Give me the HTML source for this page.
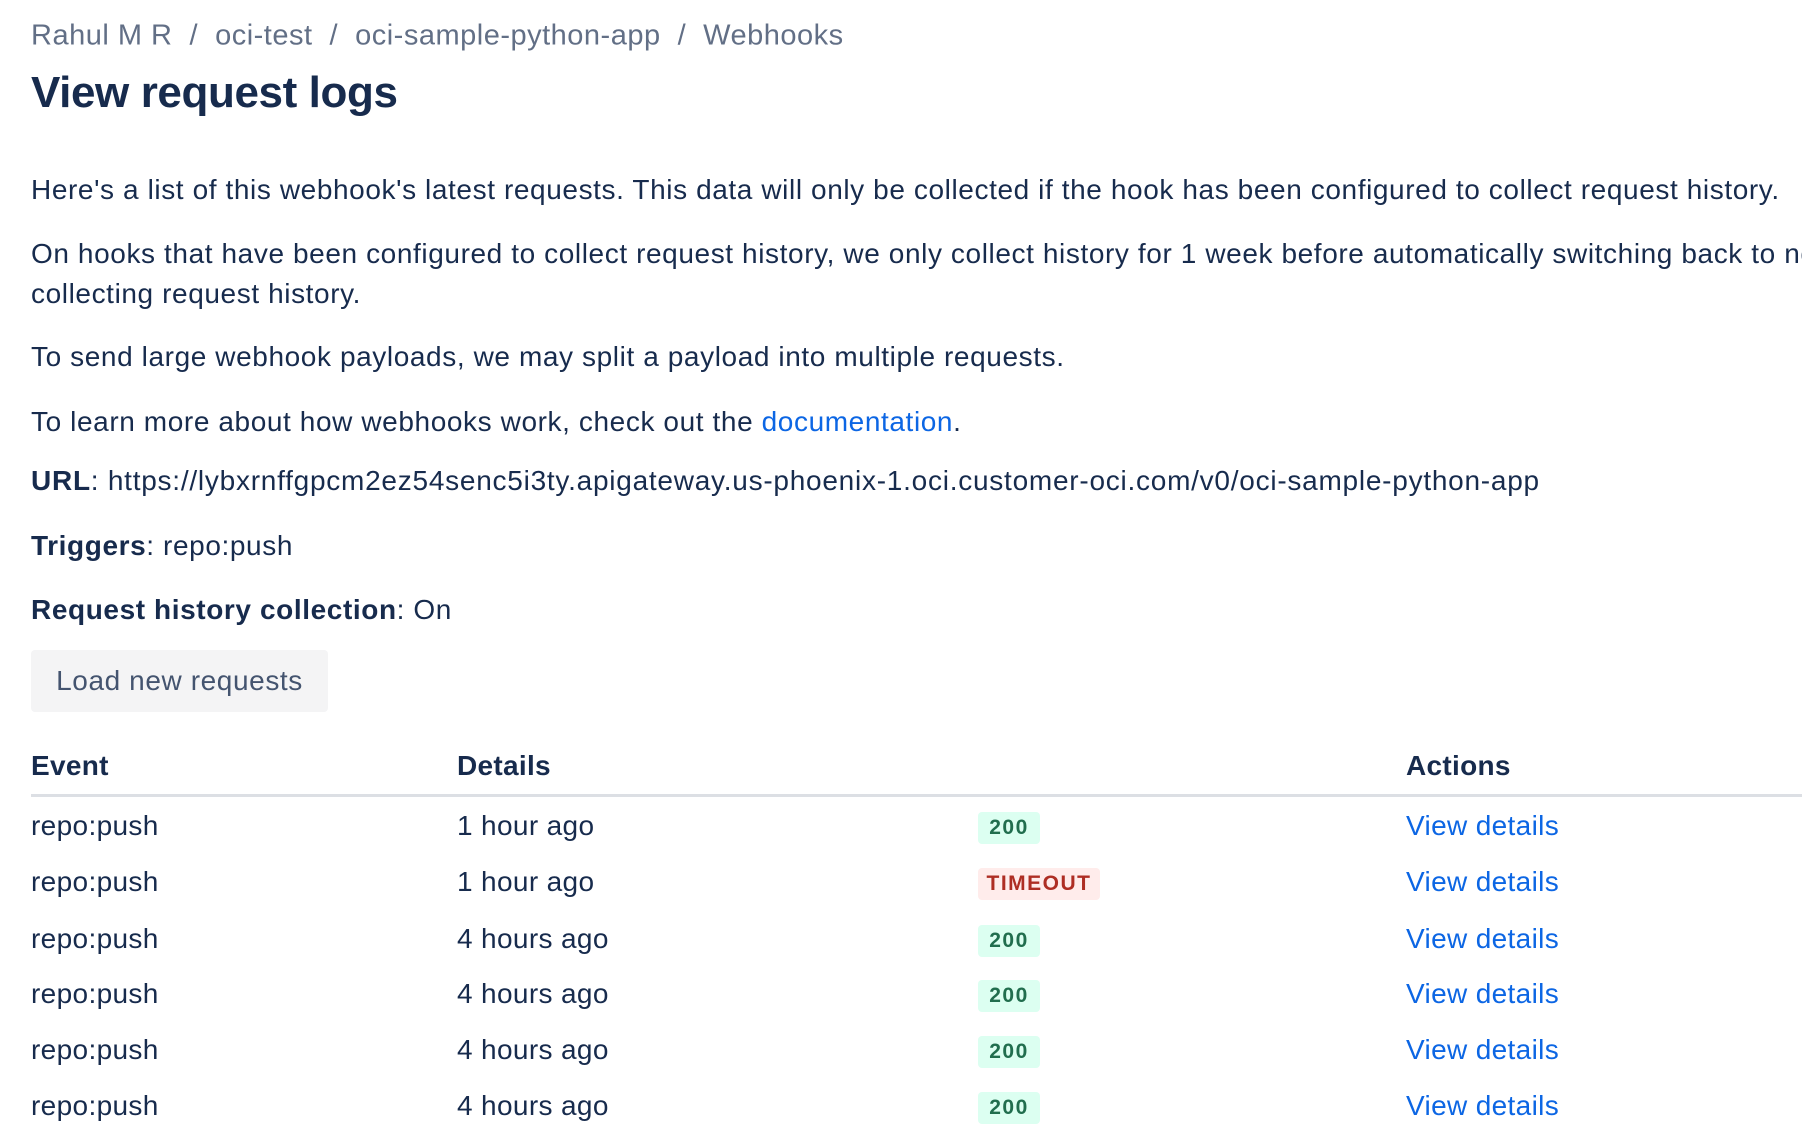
<!DOCTYPE html>
<html><head><meta charset="utf-8"><style>
html,body{margin:0;padding:0;background:#fff;width:1802px;height:1142px;overflow:hidden}
body{font-family:"Liberation Sans",sans-serif;color:#172b4d;position:relative}
.a{position:absolute;white-space:nowrap;line-height:1;transform:translateY(-50%)}
.bc{font-size:29px;color:#626f86;left:31px;top:36px;letter-spacing:0.5px}
.bc span{margin:0 17px}
h1{position:absolute;margin:0;left:31px;top:93px;transform:translateY(-50%);font-size:44px;font-weight:bold;letter-spacing:-0.4px;line-height:1;white-space:nowrap}
.p{font-size:28px;left:31px;letter-spacing:0.6px}
.u{letter-spacing:0.75px}
.t{letter-spacing:0.35px}
b{font-weight:bold}
a{color:#0c66e4;text-decoration:none}
.btn{position:absolute;left:31px;top:650px;width:297px;height:62px;background:#f4f4f5;border-radius:4px;font-size:28px;letter-spacing:0.6px;color:#44546f;display:flex;align-items:center;justify-content:center}
.th{font-size:28px;font-weight:bold;letter-spacing:0.3px}
.line{position:absolute;left:31px;right:0;top:794px;height:3px;background:#dcdfe4}
.badge{position:absolute;height:32px;transform:translateY(-50%);border-radius:4px;font-size:21px;font-weight:bold;letter-spacing:1.5px;display:flex;align-items:center;justify-content:center}
.ok{background:#dcfff1;color:#216e4e;width:62px;left:978px}
.to{background:#ffeceb;color:#ae2e24;width:122px;left:978px}
</style></head><body>
<div class="a bc">Rahul M R<span>/</span>oci-test<span>/</span>oci-sample-python-app<span>/</span>Webhooks</div>
<h1>View request logs</h1>
<div class="a p" style="top:190px">Here's a list of this webhook's latest requests. This data will only be collected if the hook has been configured to collect request history.</div>
<div class="a p" style="top:254px">On hooks that have been configured to collect request history, we only collect history for 1 week before automatically switching back to not</div>
<div class="a p" style="top:294px">collecting request history.</div>
<div class="a p" style="top:357px">To send large webhook payloads, we may split a payload into multiple requests.</div>
<div class="a p" style="top:422px">To learn more about how webhooks work, check out the <a>documentation</a>.</div>
<div class="a p u" style="top:481px"><b>URL</b>: https://lybxrnffgpcm2ez54senc5i3ty.apigateway.us-phoenix-1.oci.customer-oci.com/v0/oci-sample-python-app</div>
<div class="a p" style="top:546px"><b>Triggers</b>: repo:push</div>
<div class="a p" style="top:610px"><b>Request history collection</b>: On</div>
<div class="btn">Load new requests</div>
<div class="a th" style="left:31px;top:766px">Event</div>
<div class="a th" style="left:457px;top:766px">Details</div>
<div class="a th" style="left:1406px;top:766px">Actions</div>
<div class="line"></div>

<div class="a p t" style="top:826px">repo:push</div><div class="a p t" style="left:457px;top:826px">1 hour ago</div><div class="badge ok" style="top:828px">200</div><div class="a p t" style="left:1406px;top:826px"><a>View details</a></div>
<div class="a p t" style="top:882px">repo:push</div><div class="a p t" style="left:457px;top:882px">1 hour ago</div><div class="badge to" style="top:884px">TIMEOUT</div><div class="a p t" style="left:1406px;top:882px"><a>View details</a></div>
<div class="a p t" style="top:939px">repo:push</div><div class="a p t" style="left:457px;top:939px">4 hours ago</div><div class="badge ok" style="top:941px">200</div><div class="a p t" style="left:1406px;top:939px"><a>View details</a></div>
<div class="a p t" style="top:994px">repo:push</div><div class="a p t" style="left:457px;top:994px">4 hours ago</div><div class="badge ok" style="top:996px">200</div><div class="a p t" style="left:1406px;top:994px"><a>View details</a></div>
<div class="a p t" style="top:1050px">repo:push</div><div class="a p t" style="left:457px;top:1050px">4 hours ago</div><div class="badge ok" style="top:1052px">200</div><div class="a p t" style="left:1406px;top:1050px"><a>View details</a></div>
<div class="a p t" style="top:1106px">repo:push</div><div class="a p t" style="left:457px;top:1106px">4 hours ago</div><div class="badge ok" style="top:1108px">200</div><div class="a p t" style="left:1406px;top:1106px"><a>View details</a></div>
</body></html>
